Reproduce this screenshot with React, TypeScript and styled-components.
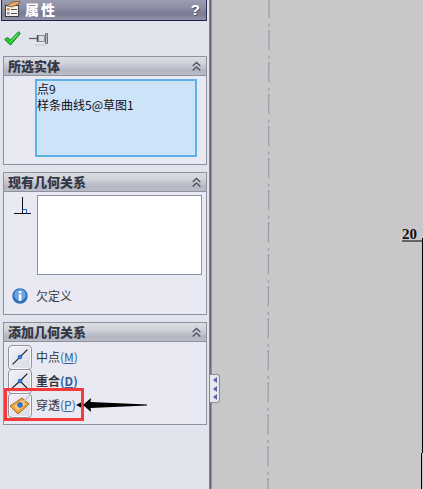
import * as React from 'react';
import styled, { createGlobalStyle } from 'styled-components';

const FONT = `"Noto Sans CJK SC", "Liberation Sans", sans-serif`;

const GlobalStyle = createGlobalStyle`
  html, body {
    margin: 0;
    padding: 0;
    overflow: hidden;
  }
  #root {
    width: 423px;
    height: 489px;
  }
`;

const Page = styled.div`
  display: flex;
  width: 423px;
  height: 489px;
  overflow: hidden;
  font-family: ${FONT};
  background: #c9c7ca;
`;

const Sidebar = styled.div`
  position: relative;
  flex: none;
  width: 209px;
  height: 100%;
  box-sizing: border-box;
  padding: 0 2px 0 1px;
  background: #e1e4ed;
  display: flex;
  flex-direction: column;
`;

const Divider = styled.div`
  flex: none;
  width: 3px;
  height: 100%;
  background: linear-gradient(to right, #8c8f9b 0, #6a6c78 50%, #a5a5ac 100%);
`;

const TitleBar = styled.div`
  height: 21px;
  flex: none;
  box-sizing: border-box;
  border-left: 1px solid #2a2c58;
  border-right: 1px solid #2a2c58;
  border-bottom: 1px solid #1d1f50;
  background: linear-gradient(to bottom, #9c9db0 0, #8a8ba1 45%, #777a92 70%, #9294a7 100%);
  display: flex;
  align-items: center;
  padding: 0 6px 1px 1px;
  color: #fff;
`;

const TitleText = styled.span`
  font-size: 14px;
  font-weight: 900;
  letter-spacing: 2px;
  margin-left: 4px;
  line-height: 17px;
`;

const Help = styled.span`
  margin-left: auto;
  font-family: "Liberation Sans", sans-serif;
  font-size: 15px;
  font-weight: 700;
  line-height: 17px;
  text-shadow: 1px 1px 0 #55576c;
`;

const ActionRow = styled.div`
  height: 35px;
  flex: none;
  display: flex;
  align-items: center;
  gap: 8px;
  padding-left: 3px;
`;

const Panel = styled.section<{ $height: number }>`
  flex: none;
  box-sizing: border-box;
  height: ${(p) => p.$height}px;
  margin: 0 0 7px 2px;
  border: 1px solid #8e919f;
  background: #e8e9f2;
`;

const PanelHeader = styled.div`
  height: 19px;
  box-sizing: border-box;
  border-bottom: 1px solid #8e919f;
  background: linear-gradient(to bottom, #dcdde2 0, #d3d5db 30%, #b4b7c2 75%, #b9bcc6 100%);
  display: flex;
  align-items: center;
  justify-content: space-between;
  padding: 0 5px 0 4px;
`;

const PanelTitle = styled.span`
  font-size: 13px;
  font-weight: 900;
  line-height: 18px;
  color: #343846;
`;

const SelectionBody = styled.div`
  padding: 3px 0 0 31px;
`;

const SelectionList = styled.div`
  width: 162px;
  height: 78px;
  box-sizing: border-box;
  border: 2px solid #5cb1e8;
  background: #cce3f8;
  padding: 0;
  font-size: 12px;
  line-height: 16px;
  color: #101018;
`;

const RelationsBody = styled.div`
  display: flex;
  flex-direction: column;
`;

const RelationsTop = styled.div`
  display: flex;
  padding: 3px 0 0 10px;
`;

const RelationsList = styled.div`
  width: 165px;
  height: 80px;
  box-sizing: border-box;
  margin-left: 6px;
  border: 1px solid #8f93a8;
  background: #fff;
`;

const StatusRow = styled.div`
  display: flex;
  align-items: center;
  margin-top: 12px;
  padding-left: 8px;
  gap: 8px;
  font-size: 12px;
  line-height: 18px;
  color: #3d4048;
`;

const AddBody = styled.div`
  display: flex;
  flex-direction: column;
  padding: 3px 0 0 4px;
`;

const RelationRow = styled.div`
  height: 24px;
  display: flex;
  align-items: center;
  gap: 4px;
`;

const IconButton = styled.div`
  width: 24px;
  height: 25px;
  flex: none;
  box-sizing: border-box;
  border: 1px solid #8f919c;
  border-radius: 4px;
  background: linear-gradient(135deg, #f2f2f6 0, #d8dae6 100%);
  box-shadow: inset 0 0 0 1px #f8f8fb;
  display: flex;
  align-items: center;
  justify-content: center;
`;

const RelationLabel = styled.span<{ $bold?: boolean }>`
  font-size: 12px;
  font-weight: ${(p) => (p.$bold ? 700 : 400)};
  line-height: 18px;
  color: #32353f;
`;

const Mnemonic = styled.span`
  color: #2e5f9e;
`;

const Underlined = styled.span`
  text-decoration: underline;
`;

const Highlight = styled.div`
  position: absolute;
  left: 4px;
  top: 388px;
  width: 80px;
  height: 33px;
  box-sizing: border-box;
  border: 3px solid #f63a3c;
`;

const CalloutArrow = styled.svg`
  position: absolute;
  left: 75px;
  top: 397px;
`;

const CollapseTab = styled.div`
  position: absolute;
  z-index: 1;
  left: 210px;
  top: 374px;
  width: 10px;
  height: 29px;
  box-sizing: border-box;
  border: 1px solid #8c8f9b;
  border-left: none;
  border-radius: 0 3px 3px 0;
  background: #e6e7ef;
  display: flex;
  flex-direction: column;
  align-items: center;
  justify-content: space-evenly;
`;

const TabArrow = styled.span`
  width: 0;
  height: 0;
  border-top: 3px solid transparent;
  border-bottom: 3px solid transparent;
  border-right: 4px solid #5f5fa6;
`;

const Canvas = styled.main`
  position: relative;
  flex: 1;
  height: 100%;
  background: #c9c7ca;
`;

const CanvasDrawing = styled.svg`
  position: absolute;
  left: 0;
  top: 0;
`;

const Dimension = styled.span`
  position: absolute;
  left: 190px;
  top: 227px;
  font-family: "Liberation Serif", serif;
  font-size: 15px;
  font-weight: 700;
  line-height: 15px;
  color: #111;
`;

const Chevrons = () => (
  <svg width="9" height="11" viewBox="0 0 9 11" fill="none" stroke="#4e5360" strokeWidth="1.3">
    <path d="M.7 5 4.500 1.500 8.300 5" />
    <path d="M.7 9.500 4.500 6 8.300 9.500" />
  </svg>
);

const PropertyIcon = () => (
  <svg width="18" height="17" viewBox="0 0 18 17" style={{ flex: 'none' }}>
    <rect x="2.500" y="4.500" width="13" height="11" fill="#f3f1ea" stroke="#3c3c44" />
    <rect x="4" y="7" width="2.500" height="2.500" fill="#e3892f" />
    <rect x="4" y="11" width="2.500" height="2.500" fill="#7a9bc8" />
    <path d="M8 8.500h6M8 12.500h6" stroke="#555" />
    <path d="M4 5 9 1 17 0 15 3.500 9 6Z" fill="#e3a765" stroke="#6e4523" strokeWidth=".7" />
  </svg>
);

const CheckIcon = () => (
  <svg width="17" height="15" viewBox="0 0 17 15">
    <path d="M.7 8.500 3.500 6.500 6.500 9 14.500 .8 16.300 2.500 6.500 14Z" fill="#22d128" stroke="#137a20" strokeWidth="1" strokeLinejoin="round" />
    <path d="M6.500 10.500 14.500 2.500" stroke="#8cf08a" strokeWidth="1" />
  </svg>
);

const PinIcon = () => (
  <svg width="19" height="14" viewBox="0 0 19 14">
    <path d="M0 6.500h8" stroke="#5a5c62" strokeWidth="1.200" />
    <path d="M8.500 3v7" stroke="#4c4e55" strokeWidth="1.500" />
    <path d="M9.500 3.500h6v6h-6Z" fill="#dcdddd" stroke="#8a8c92" />
    <path d="M16.500 1.500h2v10h-2Z" fill="#b7b8ba" stroke="#5a5c62" strokeWidth=".8" />
    <path d="M6 13h11" stroke="#c4c4ca" />
  </svg>
);

const PerpendicularIcon = () => (
  <svg width="17" height="18" viewBox="0 0 17 18" style={{ flex: 'none', marginTop: 2 }}>
    <path d="M0 16.500h17M8.500 0v16.500" stroke="#111" strokeWidth="1" />
    <path d="M8.500 12.500h4v4" fill="none" stroke="#2357d8" strokeWidth="1" />
  </svg>
);

const InfoIcon = () => (
  <svg width="16" height="16" viewBox="0 0 16 16" style={{ flex: 'none' }}>
    <circle cx="8" cy="8" r="7.700" fill="#2b6fbd" />
    <circle cx="8" cy="7" r="5.800" fill="#6aa4e2" />
    <rect x="6.800" y="3" width="2.600" height="2.400" fill="#fff" />
    <rect x="6.800" y="6.400" width="2.600" height="6.600" fill="#fff" />
  </svg>
);

const Dot = () => <circle cx="11" cy="11" r="2.400" fill="#2b7be8" stroke="#12408f" strokeWidth=".6" />;

const MidpointIcon = () => (
  <svg width="18" height="18" viewBox="0 0 22 22">
    <path d="M2 20 20 2" stroke="#15151f" strokeWidth="1.300" />
    <Dot />
  </svg>
);

const CoincidentIcon = () => (
  <svg width="18" height="18" viewBox="0 0 22 22">
    <path d="M1 20 11 11 20 2M11 11 20 20" fill="none" stroke="#15151f" strokeWidth="1.300" />
    <Dot />
  </svg>
);

const PierceIcon = () => (
  <svg width="22" height="22" viewBox="0 0 22 22">
    <path d="M1 12 13 4 20 10 9 20Z" fill="#eda63c" stroke="#a96618" strokeWidth="1" />
    <path d="M5 12 13 6.500 16.500 10 9 16.500Z" fill="#f5cf8c" />
    <path d="M11 11 21 1" stroke="#c3c4c8" strokeWidth="1.300" />
    <Dot />
  </svg>
);

export default function App() {
  return (
    <Page>
      <GlobalStyle />
      <Sidebar>
        <TitleBar>
          <PropertyIcon />
          <TitleText>属性</TitleText>
          <Help>?</Help>
        </TitleBar>
        <ActionRow>
          <CheckIcon />
          <PinIcon />
        </ActionRow>

        <Panel $height={109}>
          <PanelHeader>
            <PanelTitle>所选实体</PanelTitle>
            <Chevrons />
          </PanelHeader>
          <SelectionBody>
            <SelectionList>
              点9
              <br />
              样条曲线5@草图1
            </SelectionList>
          </SelectionBody>
        </Panel>

        <Panel $height={143}>
          <PanelHeader>
            <PanelTitle>现有几何关系</PanelTitle>
            <Chevrons />
          </PanelHeader>
          <RelationsBody>
            <RelationsTop>
              <PerpendicularIcon />
              <RelationsList />
            </RelationsTop>
            <StatusRow>
              <InfoIcon />
              <span>欠定义</span>
            </StatusRow>
          </RelationsBody>
        </Panel>

        <Panel $height={103}>
          <PanelHeader>
            <PanelTitle>添加几何关系</PanelTitle>
            <Chevrons />
          </PanelHeader>
          <AddBody>
            <RelationRow>
              <IconButton>
                <MidpointIcon />
              </IconButton>
              <RelationLabel>
                中点<Mnemonic>(<Underlined>M</Underlined>)</Mnemonic>
              </RelationLabel>
            </RelationRow>
            <RelationRow>
              <IconButton>
                <CoincidentIcon />
              </IconButton>
              <RelationLabel $bold>
                重合<Mnemonic>(<Underlined>D</Underlined>)</Mnemonic>
              </RelationLabel>
            </RelationRow>
            <RelationRow>
              <IconButton>
                <PierceIcon />
              </IconButton>
              <RelationLabel>
                穿透<Mnemonic>(<Underlined>P</Underlined>)</Mnemonic>
              </RelationLabel>
            </RelationRow>
          </AddBody>
        </Panel>

        <Highlight />
        <CalloutArrow width="73" height="16" viewBox="0 0 73 16">
          <path d="M1 8 6 5.500V10.500Z" fill="#000" />
          <path d="M8 8 16 1 15.500 5 72 7.500V8.500L15.500 11 16 15Z" fill="#000" />
        </CalloutArrow>
      </Sidebar>
      <Divider />
      <CollapseTab>
        <TabArrow />
        <TabArrow />
        <TabArrow />
      </CollapseTab>
      <Canvas>
        <CanvasDrawing width="211" height="489" viewBox="0 0 211 489">
          <path
            d="M57 0 56 489"
            fill="none"
            stroke="#9f9da1"
            strokeWidth="1.300"
            strokeDasharray="20 6 3 3"
            strokeDashoffset="2"
          />
          <path d="M190 241h21M210.500 238v215M209.500 453v36" fill="none" stroke="#000" strokeWidth="1" />
        </CanvasDrawing>
        <Dimension>20</Dimension>
      </Canvas>
    </Page>
  );
}
